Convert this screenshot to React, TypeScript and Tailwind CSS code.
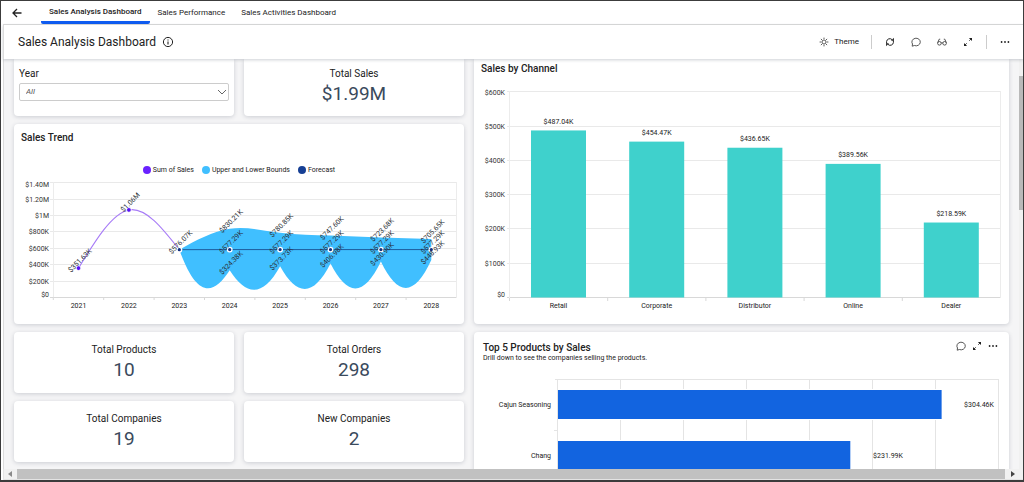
import React from "react";

const FONT = "font-['Roboto','Liberation_Sans',sans-serif]";

type Point = [number, number];

/** Natural cubic spline through evenly spaced points, as SVG curve commands. */
function spline(points: Point[]): string {
  const n = points.length;
  const h = (points[n - 1][0] - points[0][0]) / (n - 1);
  const diag: number[] = [];
  const rhs: number[] = [];
  for (let i = 0; i < n; i++) {
    const edge = i === 0 || i === n - 1;
    const prev = points[Math.max(i - 1, 0)][1];
    const next = points[Math.min(i + 1, n - 1)][1];
    diag[i] = edge ? 2 : 4;
    rhs[i] = 3 * (next - prev);
    if (i > 0) {
      const w = 1 / diag[i - 1];
      diag[i] -= w;
      rhs[i] -= w * rhs[i - 1];
    }
  }
  const m: number[] = new Array(n).fill(0);
  m[n - 1] = rhs[n - 1] / diag[n - 1];
  for (let i = n - 2; i >= 0; i--) m[i] = (rhs[i] - m[i + 1]) / diag[i];
  let d = "";
  for (let i = 0; i < n - 1; i++) {
    const [x0, y0] = points[i];
    const [x1, y1] = points[i + 1];
    d += `C${x0 + h / 3},${y0 + m[i] / 3} ${x1 - h / 3},${y1 - m[i + 1] / 3} ${x1},${y1}`;
  }
  return d;
}

const money = (v: number) => (v >= 1000 ? `$${(v / 1000).toFixed(2)}M` : `$${v.toFixed(2)}K`);

/* ---------- icons ---------- */

const BackIcon = () => (
  <svg viewBox="0 0 12 12" className="size-3" fill="none" stroke="#222" strokeWidth="1.3">
    <path d="M10.500 6H2M6 2 2 6l4 4" />
  </svg>
);
const InfoIcon = () => (
  <svg viewBox="0 0 12 12" className="size-3" fill="none" stroke="#222" strokeWidth="1">
    <circle cx="6" cy="6" r="4.6" />
    <path d="M6 5.4v3.1M6 3.4v1.1" strokeWidth="1.1" />
  </svg>
);
const SunIcon = () => (
  <svg viewBox="0 0 12 12" className="size-3" fill="none" stroke="#333" strokeWidth="0.8">
    <circle cx="6" cy="6" r="2" />
    <path d="M6 1.6v1.6M6 8.8v1.6M1.6 6h1.6M8.8 6h1.6M2.9 2.9 4 4M8 8l1.1 1.1M2.9 9.1 4 8M8 4l1.1-1.1" />
  </svg>
);
const RefreshIcon = () => (
  <svg viewBox="0 0 12 12" className="size-3" fill="none" stroke="#222" strokeWidth="1">
    <path d="M2.6 7.6V5.4A3.2 3.2 0 0 1 8 3.6M9.4 4.4v2.2A3.2 3.2 0 0 1 4 8.4" />
    <path d="M9.9 1.8v2.9H7zM2.1 10.2V7.3H5z" fill="#222" stroke="none" />
  </svg>
);
const CommentIcon = () => (
  <svg viewBox="0 0 12 12" className="size-3" fill="none" stroke="#444" strokeWidth="0.9">
    <path d="M2.2 10.2 2.5 8A4.2 3.8 0 1 1 4.4 9.5Z" strokeLinejoin="round" />
  </svg>
);
const GlassesIcon = () => (
  <svg viewBox="0 0 12 12" className="size-3" fill="none" stroke="#444" strokeWidth="0.9">
    <circle cx="3.4" cy="7.3" r="1.8" />
    <circle cx="8.6" cy="7.3" r="1.8" />
    <path d="M5.2 7q.8-.6 1.6 0M1.7 6.600 3.2 3.2h1M10.3 6.600 8.8 3.2h-1" />
  </svg>
);
const ExpandIcon = () => (
  <svg viewBox="0 0 12 12" className="size-3" fill="#222">
    <path d="M6.900 2H10v3.1zM5.100 10H2V6.900z" />
    <path d="M9 3 7.200 4.800M3 9l1.800-1.800" stroke="#222" strokeWidth="0.8" />
  </svg>
);
const DotsIcon = () => (
  <svg viewBox="0 0 12 12" className="size-3" fill="#222">
    <circle cx="2.6" cy="6" r="0.9" />
    <circle cx="6" cy="6" r="0.9" />
    <circle cx="9.4" cy="6" r="0.9" />
  </svg>
);

/* ---------- building blocks ---------- */

function Card({ className = "", children }: { className?: string; children: React.ReactNode }) {
  return (
    <section className={`rounded-sm bg-white shadow-[0_1px_4px_rgba(60,70,90,0.22)] ${className}`}>{children}</section>
  );
}

function Stat({ label, value, className = "" }: { label: string; value: string; className?: string }) {
  return (
    <Card className={`flex flex-col items-center ${className}`}>
      <h3 className="text-[10px] leading-3 text-[#222]">{label}</h3>
      <p className="mt-0.5 text-[19px] leading-6 text-[#3a4a5c]">{value}</p>
    </Card>
  );
}

function ToolButton({ label, children }: { label: string; children: React.ReactNode }) {
  return (
    <button type="button" aria-label={label} className="flex items-center">
      {children}
    </button>
  );
}

/* ---------- charts ---------- */

const YEARS = [2021, 2022, 2023, 2024, 2025, 2026, 2027, 2028];
const TREND_TICKS = ["$0", "$200K", "$400K", "$600K", "$800K", "$1M", "$1.20M", "$1.40M"];
const SALES = [351.63, 1060, 576.07];
const FORECAST = [577.29, 577.29, 577.29, 577.29, 577.29];
const UPPER = [830.21, 780.85, 747.6, 723.68, 705.65];
const LOWER = [324.38, 373.73, 406.98, 430.9, 448.93];

function TrendChart() {
  const x = (i: number) => 64.5 + i * 50.4;
  const y = (v: number) => 121 - (v / 1400) * 115;
  const at = (values: number[], from: number): Point[] => values.map((v, i) => [x(from + i), y(v)]);
  const sales = at(SALES, 0);
  const forecast = at([576.07, ...FORECAST], 2);
  const upper = at([576.07, ...UPPER], 2);
  const lower = at([576.07, ...LOWER], 2).reverse();
  let area = `M${upper[0]}${spline(upper)}L${lower[0]}`;
  for (let i = 1; i < lower.length; i++) {
    area += `C${lower[i - 1][0] - 17},121 ${lower[i][0] + 17},121 ${lower[i]}`;
  }
  const labels: { p: Point; v: number }[] = [
    ...sales.map((p, i) => ({ p, v: SALES[i] })),
    ...[UPPER, FORECAST, LOWER].flatMap((s) => at(s, 3).map((p, i) => ({ p, v: s[i] }))),
  ];
  return (
    <svg viewBox="0 0 450 148" className="block w-full" role="img" aria-label="Sales trend by year">
      {TREND_TICKS.map((t, i) => {
        const ty = Math.round(121 - i * 16.4) + 0.5;
        return (
          <g key={t}>
            <line x1="36" x2="442" y1={ty} y2={ty} stroke={i ? "#e9e9e9" : "#d8d8d8"} />
            <text x="35" y={i === 0 ? 121 : i === 7 ? 11 : ty + 2} textAnchor="end" className="fill-[#333] text-[7px]">
              {t}
            </text>
          </g>
        );
      })}
      <path d="M39.5 6v116M442.5 6v116" stroke="#ececec" />
      {YEARS.map((yr, i) => (
        <g key={yr}>
          <line x1={39.3 + i * 50.4} x2={39.3 + i * 50.4} y1="121" y2="124" stroke="#d8d8d8" />
          <text x={x(i)} y="132" textAnchor="middle" className="fill-[#222] text-[7px]">
            {yr}
          </text>
        </g>
      ))}
      <path d={area} fill="#40bfff" />
      <path d={`M${sales[0]}${spline(sales)}`} fill="none" stroke="#a77bf7" strokeWidth="1.1" />
      <path d={`M${forecast.join("L")}`} fill="none" stroke="#1d5c9e" strokeWidth="1" />
      {sales.map((p, i) => (
        <circle key={i} cx={p[0]} cy={p[1]} r="2.4" fill="#5a13f5" stroke="#fff" strokeWidth="0.9" />
      ))}
      {forecast.map((p, i) => (
        <circle key={i} cx={p[0]} cy={p[1]} r="2.3" fill="#14307e" stroke="#fff" strokeWidth="1.3" />
      ))}
      {labels.map(({ p, v }, i) => (
        <text
          key={i}
          transform={`translate(${p[0] + 3} ${p[1] - 6}) rotate(-45)`}
          textAnchor="middle"
          className="fill-[#2a2f36] text-[7px]"
        >
          {money(v)}
        </text>
      ))}
    </svg>
  );
}

const CHANNELS = [
  { name: "Retail", value: 487.04 },
  { name: "Corporate", value: 454.47 },
  { name: "Distributor", value: 436.65 },
  { name: "Online", value: 389.56 },
  { name: "Dealer", value: 218.59 },
];

function ChannelChart() {
  return (
    <svg viewBox="0 0 535 240" className="block w-full" role="img" aria-label="Sales by channel">
      {[0, 1, 2, 3, 4, 5, 6].map((i) => {
        const ty = Math.round(213 - i * 34.3) + 0.5;
        return (
          <g key={i}>
            <line x1="33" x2="526" y1={ty} y2={ty} stroke={i ? "#e9e9e9" : "#d8d8d8"} />
            <text x="31" y={i === 0 ? 213 : i === 6 ? 11 : ty + 2} textAnchor="end" className="fill-[#333] text-[7px]">
              {i ? `$${i}00K` : "$0"}
            </text>
          </g>
        );
      })}
      <path d="M35.5 7v207M526.5 7v207" stroke="#ececec" />
      {CHANNELS.map((c, i) => {
        const cx = 84.5 + i * 98.2;
        const h = c.value * 0.343;
        return (
          <g key={c.name}>
            <line x1={35.5 + i * 98.2} x2={35.5 + i * 98.2} y1="214" y2="217" stroke="#d8d8d8" />
            <rect x={cx - 27.5} y={213.5 - h} width="55" height={h} fill="#3fd1cc" />
            <text x={cx} y={207 - h} textAnchor="middle" className="fill-[#222] text-[7px]">
              {money(c.value)}
            </text>
            <text x={cx} y="224" textAnchor="middle" className="fill-[#222] text-[7px]">
              {c.name}
            </text>
          </g>
        );
      })}
    </svg>
  );
}

const PRODUCTS = [
  { name: "Cajun Seasoning", value: 304.46, labelX: 505 },
  { name: "Chang", value: 231.99, labelX: 414 },
];

function ProductsChart() {
  return (
    <svg viewBox="0 0 535 110" className="block w-full" role="img" aria-label="Top products by sales">
      <path d="M81 7.500H524" stroke="#e4e4e4" />
      {[0, 1, 2, 3, 4, 5, 6, 7].map((i) => (
        <line key={i} x1={Math.round(83 + i * 63) + 0.5} x2={Math.round(83 + i * 63) + 0.5} y1="7" y2="110" stroke="#e4e4e4" />
      ))}
      {PRODUCTS.map((p, i) => (
        <g key={p.name}>
          <line x1="80" x2="84" y1={58.5 + i * 51} y2={58.5 + i * 51} stroke="#e4e4e4" />
          <rect x="84" y={17 + i * 51} width={p.value * 1.26} height="31" fill="#fff" />
          <rect x="84" y={18 + i * 51} width={p.value * 1.26} height="29" fill="#1264e0" />
          <text x="77" y={35 + i * 51} textAnchor="end" className="fill-[#222] text-[7px]">
            {p.name}
          </text>
          <text x={p.labelX} y={35 + i * 51} textAnchor="middle" className="fill-[#222] text-[7px]">
            {money(p.value)}
          </text>
        </g>
      ))}
    </svg>
  );
}

const LEGEND = [
  { name: "Sum of Sales", color: "bg-[#6a22ff]" },
  { name: "Upper and Lower Bounds", color: "bg-[#40bfff]" },
  { name: "Forecast", color: "bg-[#163f94]" },
];

export default function App() {
  return (
    <div className={`flex h-screen flex-col border border-b-2 border-[#3c3c3c] bg-white pl-0.5 text-[#222] ${FONT}`}>
      <nav className="flex h-6 shrink-0 items-stretch border-b border-[#dcdcdc] pl-2">
        <button type="button" aria-label="Back" className="mr-[18px] flex items-center">
          <BackIcon />
        </button>
        <a href="#analysis" className="flex items-center rounded-b-xs border-b-3 border-[#0f5cf0] px-2 pt-0.5 text-[8px] font-medium">
          Sales Analysis Dashboard
        </a>
        <a href="#performance" className="flex items-center px-2 text-[8px]">
          Sales Performance
        </a>
        <a href="#activities" className="flex items-center px-2 text-[8px]">
          Sales Activities Dashboard
        </a>
      </nav>

      <header className="relative z-10 flex h-[34px] shrink-0 items-center border-l border-[#dcdcdc] bg-white pr-3 pl-3.5 shadow-[0_1px_3px_rgba(60,70,90,0.25)]">
        <h1 className="text-[12px]">Sales Analysis Dashboard</h1>
        <span className="ml-1.5">
          <InfoIcon />
        </span>
        <div className="ml-auto flex items-center gap-3">
          <button type="button" className="flex items-center gap-1 text-[8px]">
            <SunIcon />
            Theme
          </button>
          <span className="h-3.5 w-px bg-[#ccc]" />
          <div className="flex items-center gap-3.5">
            <ToolButton label="Refresh"><RefreshIcon /></ToolButton>
            <ToolButton label="Comments"><CommentIcon /></ToolButton>
            <ToolButton label="View"><GlassesIcon /></ToolButton>
            <ToolButton label="Full screen"><ExpandIcon /></ToolButton>
          </div>
          <span className="h-3.5 w-px bg-[#ccc]" />
          <ToolButton label="More"><DotsIcon /></ToolButton>
        </div>
      </header>

      <div className="flex min-h-0 flex-1 border-l border-[#dcdcdc]">
        <main className="grid min-w-0 flex-1 grid-cols-[450fr_535fr] items-start gap-2.5 overflow-hidden bg-[#f5f5f6] px-2.5">
          <div className="grid grid-cols-2 gap-x-2.5 gap-y-2">
            <Card className="h-[57px] rounded-t-none px-[5px] pt-[9px]">
              <label htmlFor="year" className="block text-[10px] leading-3">
                Year
              </label>
              <div className="relative mt-[3px]">
                <select
                  id="year"
                  className="block h-[18px] w-full appearance-none rounded-xs border border-[#ccc] bg-white px-1.5 text-[8px] text-[#555] italic"
                >
                  <option>All</option>
                </select>
                <svg viewBox="0 0 10 6" className="pointer-events-none absolute top-1.5 right-0.5 h-1.5 w-2.5" fill="none" stroke="#666">
                  <path d="m1 1 4 4 4-4" />
                </svg>
              </div>
            </Card>
            <Stat label="Total Sales" value="$1.99M" className="h-[57px] rounded-t-none pt-[9px]" />

            <Card className="col-span-2">
              <h2 className="px-[7px] pt-2 text-[10px] leading-3 font-medium">Sales Trend</h2>
              <ul className="mt-5 flex h-3 items-center justify-center gap-2 text-[7px]">
                {LEGEND.map((l) => (
                  <li key={l.name} className="flex items-center gap-0.5">
                    <span className={`size-2 rounded-full ${l.color}`} />
                    {l.name}
                  </li>
                ))}
              </ul>
              <TrendChart />
            </Card>

            <Stat label="Total Products" value="10" className="h-[61px] pt-3" />
            <Stat label="Total Orders" value="298" className="h-[61px] pt-3" />
            <Stat label="Total Companies" value="19" className="h-[61px] pt-3" />
            <Stat label="New Companies" value="2" className="h-[61px] pt-3" />
          </div>

          <div className="flex flex-col gap-2">
            <Card className="rounded-t-none">
              <h2 className="px-[7px] pt-1 pb-[9px] text-[10px] leading-3 font-medium">Sales by Channel</h2>
              <ChannelChart />
            </Card>
            <Card>
              <div className="flex justify-between pt-2 pr-2.5 pl-[9px]">
                <div className="pt-0.5">
                  <h2 className="text-[10px] leading-[11px] font-medium">Top 5 Products by Sales</h2>
                  <p className="text-[7px] leading-[11px]">Drill down to see the companies selling the products.</p>
                </div>
                <div className="flex h-3 gap-1">
                  <ToolButton label="Comment on products"><CommentIcon /></ToolButton>
                  <ToolButton label="Expand products"><ExpandIcon /></ToolButton>
                  <ToolButton label="More product options"><DotsIcon /></ToolButton>
                </div>
              </div>
              <div className="pt-2">
                <ProductsChart />
              </div>
            </Card>
          </div>
        </main>
        <div className="w-1 bg-[#f1f1f1] pt-[17px]">
          <div className="h-[134px] bg-[#b9b9b9]" />
        </div>
      </div>

      <div className="flex h-[11px] shrink-0 items-center border-b border-l border-[#e4e4e4] bg-[#f1f1f1]">
        <svg viewBox="0 0 13 10" className="h-2.5 w-[13px] fill-[#8a8a8a]">
          <path d="M8 2v6L4 5z" />
        </svg>
        <div className="h-full flex-1 bg-[#c1c1c1]" />
        <svg viewBox="0 0 18 10" className="h-2.5 w-[18px] fill-[#444]">
          <path d="M6 2v6l4-3z" />
        </svg>
      </div>
    </div>
  );
}
